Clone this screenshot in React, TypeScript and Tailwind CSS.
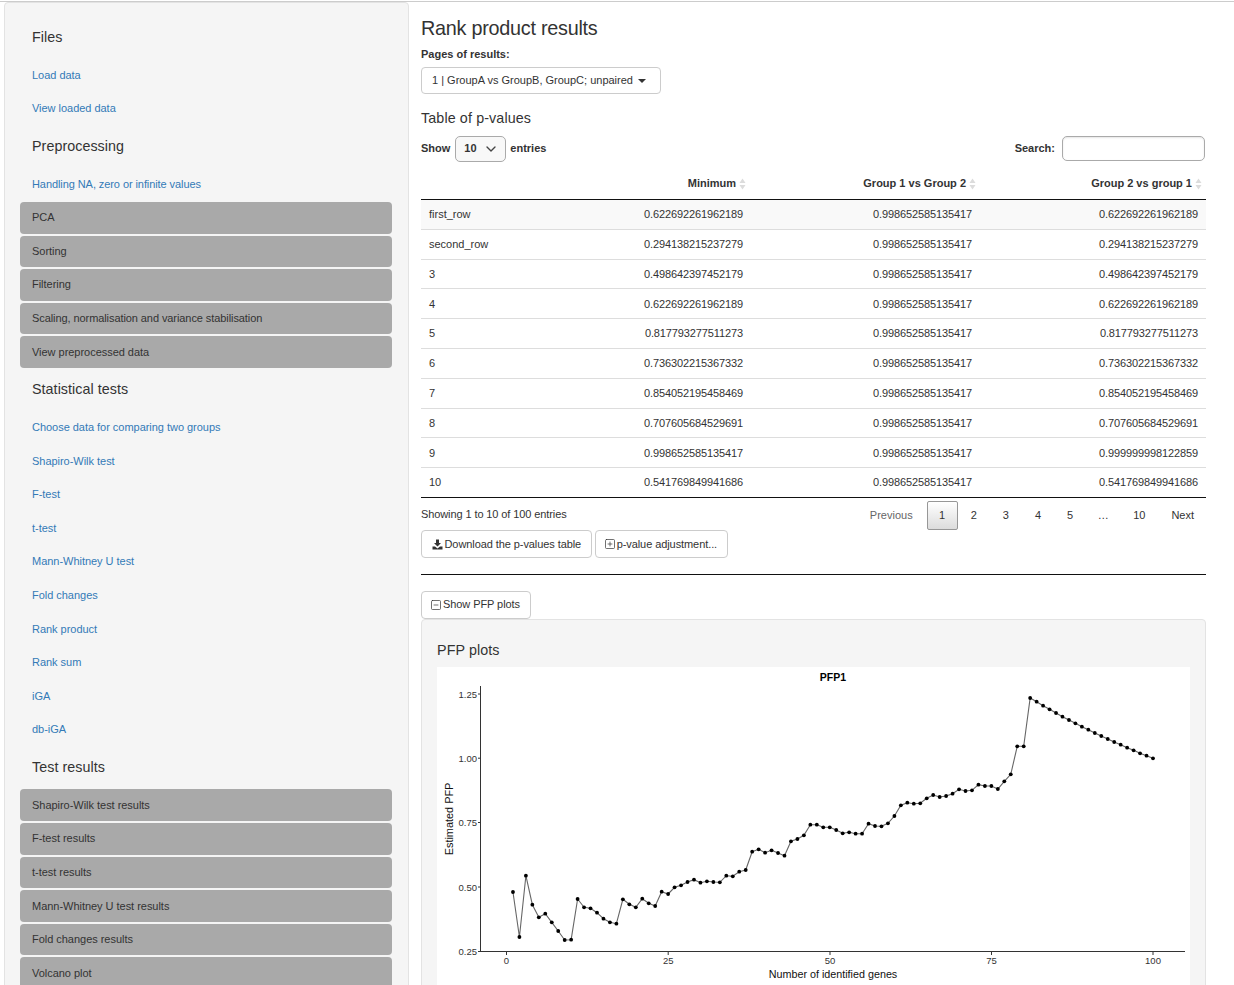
import { ChevronDown, SquareMinus, SquarePlus } from 'lucide-react';

const filesLinks = ['Load data', 'View loaded data'];
const preprocessing = [
  { label: 'Handling NA, zero or infinite values', active: false, tight: true },
  { label: 'PCA', active: true },
  { label: 'Sorting', active: true },
  { label: 'Filtering', active: true },
  { label: 'Scaling, normalisation and variance stabilisation', active: true, tight: true },
  { label: 'View preprocessed data', active: true },
];
const statTests = [
  'Choose data for comparing two groups',
  'Shapiro-Wilk test',
  'F-test',
  't-test',
  'Mann-Whitney U test',
  'Fold changes',
  'Rank product',
  'Rank sum',
  'iGA',
  'db-iGA',
];
const testResults = [
  'Shapiro-Wilk test results',
  'F-test results',
  't-test results',
  'Mann-Whitney U test results',
  'Fold changes results',
  'Volcano plot',
];

const rows = [
  ['first_row', '0.622692261962189', '0.998652585135417', '0.622692261962189'],
  ['second_row', '0.294138215237279', '0.998652585135417', '0.294138215237279'],
  ['3', '0.498642397452179', '0.998652585135417', '0.498642397452179'],
  ['4', '0.622692261962189', '0.998652585135417', '0.622692261962189'],
  ['5', '0.817793277511273', '0.998652585135417', '0.817793277511273'],
  ['6', '0.736302215367332', '0.998652585135417', '0.736302215367332'],
  ['7', '0.854052195458469', '0.998652585135417', '0.854052195458469'],
  ['8', '0.707605684529691', '0.998652585135417', '0.707605684529691'],
  ['9', '0.998652585135417', '0.998652585135417', '0.999999998122859'],
  ['10', '0.541769849941686', '0.998652585135417', '0.541769849941686'],
];

// y pixel of every point on the PFP curve, rank 1 to 100
const curve = [
  892, 937, 875.7, 904.7, 917.3, 913.7, 922.3, 931, 940, 939.7, 899, 907.3, 908.3, 912.7, 918.7, 922.3, 923.7, 899.3,
  904.3, 907.3, 898.7, 903.3, 906, 891.7, 894, 887.3, 885.3, 882, 879.7, 882.7, 881.3, 882, 882.3, 875.7, 876.3, 871.7,
  870, 851.7, 849.3, 852.7, 850.3, 853, 855.7, 841.3, 839, 835.3, 824.7, 824.7, 827.3, 827.3, 830, 833.3, 832.3, 833.7,
  833.7, 823.7, 826, 826.3, 823.3, 816, 805.3, 802.7, 803.7, 803.3, 798.3, 795, 797, 796, 793.7, 789.3, 791, 790.3,
  784.7, 786, 786, 789, 781.3, 774.3, 746.3, 746.3, 698, 701.7, 705.7, 709.3, 713, 716.7, 720, 723.3, 726.7, 729.7, 733,
  736, 739, 742, 744.7, 747.7, 750.3, 753.3, 755.7, 758.3,
];

const points = curve.map((y, i) => ({ x: 69.5 + (i + 1) * 6.465, y: y - 667 }));

function Item({ label, active, tight }: { label: string; active?: boolean; tight?: boolean }) {
  return (
    <a
      className={`flex h-[31.6px] items-center rounded-[4px] pt-[0.7px] pl-[12px] ${
        tight ? 'tracking-[-0.08px]' : 'tracking-[-0.03px]'
      } ${active ? 'bg-[#a9a9a9] text-[#333]' : 'text-[#337ab7]'}`}
    >
      {label}
    </a>
  );
}

function SideHeading({ children }: { children: string }) {
  return <h4 className="flex h-[43.8px] items-center pl-[12px] text-[14.3px] tracking-[0.05px] text-[#333]">{children}</h4>;
}

function SortArrows() {
  return (
    <svg width="7" height="12" viewBox="0 0 7 12" className="ml-[3px] shrink-0">
      <path d="M3.5 0.5 L6.5 5 H0.5 Z" fill="#dcdcdc" />
      <path d="M3.5 11.5 L6.5 7 H0.5 Z" fill="#dcdcdc" />
    </svg>
  );
}

function DownloadIcon() {
  return (
    <svg width="11" height="11" viewBox="0 0 11 11" className="shrink-0">
      <path d="M4 0.5 H7 V4 H9 L5.5 7.6 L2 4 H4 Z" fill="#333" />
      <path d="M0.5 7.5 H3 L5.5 9.4 L8 7.5 H10.5 V10.5 H0.5 Z" fill="#333" />
    </svg>
  );
}

function PFPPlot() {
  const line = points.map((p) => `${p.x},${p.y}`).join(' ');
  const yTicks = [
    { label: '1.25', y: 27 },
    { label: '1.00', y: 91.2 },
    { label: '0.75', y: 155.5 },
    { label: '0.50', y: 220 },
    { label: '0.25', y: 284.5 },
  ];
  const xTicks = [
    { label: '0', x: 69.5 },
    { label: '25', x: 231.2 },
    { label: '50', x: 393 },
    { label: '75', x: 554.5 },
    { label: '100', x: 716 },
  ];
  return (
    <svg width="753" height="330" viewBox="0 0 753 330" className="block bg-white">
      <text x="396" y="14" textAnchor="middle" fontSize="10.5" fontWeight="700" fill="#000">
        PFP1
      </text>
      <line x1="43.5" y1="19" x2="43.5" y2="285" stroke="#333" strokeWidth="1" />
      <line x1="43" y1="284.5" x2="748" y2="284.5" stroke="#333" strokeWidth="1" />
      {yTicks.map((t) => (
        <g key={t.label}>
          <line x1="41" y1={t.y} x2="43.5" y2={t.y} stroke="#333" strokeWidth="1" />
          <text x="40" y={t.y + 3.7} textAnchor="end" fontSize="9.5" fill="#333">
            {t.label}
          </text>
        </g>
      ))}
      {xTicks.map((t) => (
        <g key={t.label}>
          <line x1={t.x} y1="285" x2={t.x} y2="288" stroke="#333" strokeWidth="1" />
          <text x={t.x} y="296.5" textAnchor="middle" fontSize="9.5" fill="#333">
            {t.label}
          </text>
        </g>
      ))}
      <polyline points={line} fill="none" stroke="#666" strokeWidth="1.1" />
      {points.map((p, i) => (
        <circle key={i} cx={p.x} cy={p.y} r="1.9" fill="#000" />
      ))}
      <text x="396" y="311" textAnchor="middle" fontSize="10.75" fill="#111">
        Number of identified genes
      </text>
      <text
        transform="translate(16 152) rotate(-90)"
        textAnchor="middle"
        fontSize="10.9"
        fill="#111"
      >
        Estimated PFP
      </text>
    </svg>
  );
}

export default function App() {
  return (
    <div className="h-screen overflow-hidden bg-white font-['Liberation_Sans',Arial,sans-serif] text-[11px] leading-[15.7px] text-[#333]">
      <div className="h-[2px] border-b border-[#cccccc]" />
      <div className="flex">
        {/* sidebar */}
        <aside className="ml-[4px] w-[405px] shrink-0 rounded-[4px] border border-[#e3e3e3] bg-[#f5f5f5] pt-[12.6px] pr-[16px] pb-[20px] pl-[15px]">
          <SideHeading>Files</SideHeading>
          <nav className="flex flex-col gap-[2px]">
            {filesLinks.map((l) => (
              <Item key={l} label={l} />
            ))}
          </nav>
          <SideHeading>Preprocessing</SideHeading>
          <nav className="flex flex-col gap-[2px]">
            {preprocessing.map((l) => (
              <Item key={l.label} label={l.label} active={l.active} tight={l.tight} />
            ))}
          </nav>
          <SideHeading>Statistical tests</SideHeading>
          <nav className="flex flex-col gap-[2px]">
            {statTests.map((l) => (
              <Item key={l} label={l} />
            ))}
          </nav>
          <SideHeading>Test results</SideHeading>
          <nav className="flex flex-col gap-[2px]">
            {testResults.map((l) => (
              <Item key={l} label={l} active />
            ))}
          </nav>
        </aside>

        {/* main panel */}
        <main className="ml-[12px] w-[785px] shrink-0 pt-[14px]">
          <h3 className="flex h-[25px] items-center text-[19.8px] tracking-[-0.25px]">Rank product results</h3>
          <label className="mt-[6px] flex h-[16px] items-center font-bold">Pages of results:</label>
          <button className="mt-[4px] flex h-[27px] w-[240px] items-center rounded-[4px] border border-[#ccc] bg-white pl-[10px]">
            1 | GroupA vs GroupB, GroupC; unpaired
            <span className="ml-[5px] h-0 w-0 border-x-[4px] border-t-[4px] border-x-transparent border-t-[#333]" />
          </button>
          <h4 className="mt-[15px] flex h-[20px] items-center text-[14.3px] tracking-[0.12px]">Table of p-values</h4>

          <div className="mt-[7px] flex h-[26px] items-center justify-between font-bold">
            <div className="flex items-center">
              Show
              <div className="mr-[4px] ml-[5px] flex h-[26px] w-[51px] items-center justify-between rounded-[5px] border border-[#aaa] bg-[#f8f8f8] pr-[6px] pl-[8px]">
                10
                <ChevronDown size={16} strokeWidth={2} className="text-[#444]" />
              </div>
              entries
            </div>
            <div className="flex items-center pr-[1px] pb-[1px]">
              Search:
              <div className="ml-[7px] h-[25px] w-[143px] rounded-[5px] border border-[#aaa] bg-white shadow-[inset_0_1px_2px_rgba(0,0,0,0.1)]" />
            </div>
          </div>

          {/* table */}
          <div className="grid h-[38px] grid-cols-[329px_229px_227px] border-b border-[#111] pt-[14px] pb-[11px] font-bold">
            <div className="flex items-center justify-end pr-[4px]">
              Minimum
              <SortArrows />
            </div>
            <div className="flex items-center justify-end pr-[3px]">
              Group 1 vs Group 2
              <SortArrows />
            </div>
            <div className="flex items-center justify-end pr-[4px]">
              Group 2 vs group 1
              <SortArrows />
            </div>
          </div>
          {rows.map((row, i) => (
            <div
              key={row[0]}
              className={`grid h-[29.8px] grid-cols-[329px_229px_227px] items-center border-b pt-[1.3px] tracking-[-0.12px] ${
                i === rows.length - 1 ? 'border-[#111]' : 'border-[#ddd]'
              } ${i === 0 ? 'bg-[#f9f9f9]' : ''}`}
            >
              <div className="flex justify-between pr-[7px] pl-[8px]">
                <span className="tracking-normal">{row[0]}</span>
                <span>{row[1]}</span>
              </div>
              <div className="pr-[7px] text-right">{row[2]}</div>
              <div className="pr-[8px] text-right">{row[3]}</div>
            </div>
          ))}

          <div className="flex h-[32px] items-start justify-between">
            <span className="mt-[9px] tracking-[-0.1px]">Showing 1 to 10 of 100 entries</span>
            <div className="mt-[3px] flex items-center">
              <a className="flex h-[29px] items-center px-[12px] text-[#666]">Previous</a>
              <a className="ml-[2px] flex h-[29px] w-[31px] items-center justify-center rounded-[2px] border border-[#979797] bg-gradient-to-b from-white to-[#dcdcdc]">
                1
              </a>
              <a className="ml-[1px] flex h-[29px] items-center px-[12px]">2</a>
              {['3', '4', '5'].map((p) => (
                <a key={p} className="ml-[2px] flex h-[29px] items-center px-[12px]">
                  {p}
                </a>
              ))}
              <a className="ml-[2px] flex h-[29px] items-center px-[10.5px]">…</a>
              {['10', 'Next'].map((p) => (
                <a key={p} className="ml-[2px] flex h-[29px] items-center px-[12px]">
                  {p}
                </a>
              ))}
            </div>
          </div>

          <div className="flex gap-[3px] tracking-[-0.08px]">
            <button className="flex h-[28px] items-center gap-[2px] rounded-[4px] border border-[#ccc] bg-white px-[9.5px] pt-[1px]">
              <DownloadIcon />
              Download the p-values table
            </button>
            <button className="flex h-[28px] items-center gap-[1px] rounded-[4px] border border-[#ccc] bg-white pt-[1px] pr-[10px] pl-[8px]">
              <SquarePlus size={12} strokeWidth={1.4} />
              p-value adjustment...
            </button>
          </div>

          <hr className="mt-[16px] border-t border-[#111]" />

          <button className="mt-[16px] flex h-[28px] items-center gap-[1px] rounded-[4px] border border-[#ccc] bg-white pr-[10px] pl-[8px] tracking-[-0.08px]">
            <SquareMinus size={12} strokeWidth={1.4} />
            Show PFP plots
          </button>

          <section className="rounded-[4px] border border-[#e3e3e3] bg-[#f5f5f5] px-[15px] pb-[20px]">
            <h4 className="flex h-[47px] items-end pb-[8px] text-[14.3px] tracking-[0.1px]">PFP plots</h4>
            <PFPPlot />
          </section>
        </main>
      </div>
    </div>
  );
}
